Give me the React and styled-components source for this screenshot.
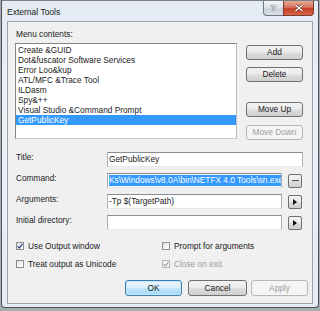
import React from "react";
import styled, { createGlobalStyle, css } from "styled-components";

const GlobalStyle = createGlobalStyle`
  html, body { margin: 0; padding: 0; }
  body {
    background: #a7adb5;
    width: 320px;
    height: 311px;
    overflow: hidden;
    font-family: "Liberation Sans", Arial, sans-serif;
    font-size: 8.3px;
    color: #1b1b1b;
  }
`;

const Window = styled.div`
  box-sizing: border-box;
  margin-left: 1px;
  width: 318px;
  height: 308px;
  border: 1px solid #4f5257;
  border-top-color: #7a7f86;
  border-radius: 0 0 4px 4px;
  background: linear-gradient(180deg, #e4ebf3 0%, #eef2f7 40%, #e6ecf3 100%);
  padding: 0 5px 3px 5px;
  display: flex;
  flex-direction: column;
`;

const TitleBar = styled.div`
  height: 20px;
  display: flex;
  align-items: flex-start;
  justify-content: space-between;
`;

const TitleText = styled.div`
  padding-top: 6px;
  font-size: 8.5px;
  line-height: 11px;
  color: #1a1a1a;
`;

const Captions = styled.div`
  display: flex;
  margin-right: -1px;
`;

const CaptionButton = styled.div`
  box-sizing: border-box;
  height: 15px;
  display: flex;
  align-items: center;
  justify-content: center;
  border: 1px solid #6f7880;
  border-top: none;
  ${(p) =>
    p.$close
      ? css`
          width: 31px;
          border-radius: 0 0 4px 0;
          background: linear-gradient(180deg, #e7a998 0%, #d7735d 45%, #c23f26 55%, #d8644a 100%);
          border-color: #7d3a2e;
        `
      : css`
          width: 20px;
          border-right: none;
          border-radius: 0 0 0 4px;
          background: linear-gradient(180deg, #f4f6f8 0%, #dde2e8 50%, #cbd2da 55%, #d9dfe6 100%);
        `}
`;

const Client = styled.div`
  flex: 1;
  box-sizing: border-box;
  background: #f0f0f0;
  border: 1px solid #9aa3ad;
  padding: 7px 0 0 7px;
  display: flex;
  flex-direction: column;
`;

const TopSection = styled.div`
  display: flex;
  align-items: flex-start;
`;

const ListColumn = styled.div`
  width: 222px;
  display: flex;
  flex-direction: column;
`;

const SectionLabel = styled.div`
  line-height: 11px;
  padding-left: 1px;
  margin-bottom: 3px;
`;

const ListBox = styled.div`
  box-sizing: border-box;
  height: 96px;
  background: #fff;
  border: 1px solid #82878e;
  border-right-color: #b6bcc4;
  border-bottom-color: #c9ced4;
  padding-top: 1px;
`;

const ListItem = styled.div`
  height: 10px;
  line-height: 10px;
  padding-left: 2px;
  white-space: nowrap;
  ${(p) =>
    p.$selected &&
    css`
      background: #3399ff;
      color: #fff;
    `}
`;

const SideButtons = styled.div`
  margin-left: 9px;
  margin-top: 16px;
  display: flex;
  flex-direction: column;
`;

const Button = styled.div`
  box-sizing: border-box;
  width: ${(p) => p.$w || 57}px;
  height: ${(p) => p.$h || 15}px;
  margin-top: ${(p) => p.$mt || 0}px;
  margin-left: ${(p) => p.$ml || 0}px;
  display: flex;
  align-items: center;
  justify-content: center;
  border: 1px solid #707070;
  border-radius: 3px;
  background: linear-gradient(180deg, #f2f2f2 0%, #ebebeb 48%, #dddddd 52%, #cfcfcf 100%);
  color: #1b1b1b;
  line-height: 1;
  ${(p) =>
    p.$default &&
    css`
      border-color: #3c7fb1;
      background: linear-gradient(180deg, #eaf6fd 0%, #d9f0fc 48%, #bee6fd 52%, #a7d9f5 100%);
      box-shadow: inset 0 0 0 1px #c8e6f8;
    `}
  ${(p) =>
    p.$disabled &&
    css`
      border-color: #b5b8bb;
      background: #f4f4f4;
      color: #a0a0a0;
    `}
`;

const Form = styled.div`
  margin-top: 12px;
  display: flex;
  flex-direction: column;
  gap: 6px;
`;

const FormRow = styled.div`
  display: flex;
  align-items: flex-start;
`;

const FieldLabel = styled.div`
  width: 91px;
  padding-left: 1px;
  line-height: 10px;
`;

const Input = styled.div`
  box-sizing: border-box;
  width: ${(p) => p.$w}px;
  height: 15px;
  background: #fff;
  border: 1px solid #abadb3;
  border-top-color: #8a8d94;
  border-bottom-color: #e3e9ef;
  padding: 0 1px;
  line-height: 13px;
  white-space: nowrap;
  overflow: hidden;
`;

const Selection = styled.span`
  display: inline-block;
  background: #3399ff;
  color: #fff;
  line-height: 11px;
  margin-top: 1px;
  vertical-align: top;
`;

const SmallButton = styled.div`
  box-sizing: border-box;
  width: 14px;
  height: 14px;
  margin-left: 6px;
  margin-top: 1px;
  border: 1px solid #707070;
  border-radius: 2px;
  background: linear-gradient(180deg, #f2f2f2 0%, #ebebeb 48%, #dddddd 52%, #cfcfcf 100%);
  display: flex;
  align-items: center;
  justify-content: center;
`;

const Options = styled.div`
  margin-top: 10px;
  display: grid;
  grid-template-columns: 146px auto;
  row-gap: 6px;
`;

const Option = styled.div`
  display: flex;
  align-items: center;
  height: 12px;
  color: ${(p) => (p.$disabled ? "#9c9c9c" : "#1b1b1b")};
`;

const Box = styled.div`
  box-sizing: border-box;
  width: 8px;
  height: 8px;
  margin-left: 1px;
  margin-right: 4px;
  border: 1px solid ${(p) => (p.$disabled ? "#b8b8b8" : "#8e8f8f")};
  background: ${(p) =>
    p.$disabled ? "#f4f4f4" : "linear-gradient(135deg, #dcdcdc 0%, #f6f6f6 60%, #ffffff 100%)"};
  display: flex;
  align-items: center;
  justify-content: center;
`;

const Footer = styled.div`
  margin-top: 10px;
  display: flex;
  justify-content: flex-end;
  padding-right: 4px;
  gap: 6px;
`;

const Check = ({ disabled }) => (
  <svg width="6" height="6" viewBox="0 0 6 6">
    <path
      d="M0.6 3.2 L2.3 5 L5.4 0.8"
      fill="none"
      stroke={disabled ? "#a5a5a5" : "#24407a"}
      strokeWidth="1.2"
    />
  </svg>
);

const Arrow = () => (
  <svg width="4" height="6" viewBox="0 0 4 6">
    <path d="M0 0 L4 3 L0 6 Z" fill="#111" />
  </svg>
);

const Dots = () => (
  <svg width="7" height="2" viewBox="0 0 7 2">
    <rect x="0" y="0" width="7" height="1" fill="#555" />
  </svg>
);

const CloseX = () => (
  <svg width="10" height="8" viewBox="0 0 10 8">
    <path d="M1.5 1 L8.5 7 M8.5 1 L1.5 7" stroke="#6a2a1f" strokeWidth="2.6" />
    <path d="M1.5 1 L8.5 7 M8.5 1 L1.5 7" stroke="#ffffff" strokeWidth="1.5" />
  </svg>
);

const HelpGlyph = styled.span`
  font-family: "Liberation Sans", Arial, sans-serif;
  font-size: 9px;
  font-weight: bold;
  color: #f8f8f8;
  text-shadow: 0 0 1px #333, 0 0 1px #333;
`;

const items = [
  "Create &GUID",
  "Dot&fuscator Software Services",
  "Error Loo&kup",
  "ATL/MFC &Trace Tool",
  "ILDasm",
  "Spy&++",
  "Visual Studio &Command Prompt",
  "GetPublicKey",
];

export default function App() {
  return (
    <>
      <GlobalStyle />
      <Window>
        <TitleBar>
          <TitleText>External Tools</TitleText>
          <Captions>
            <CaptionButton>
              <HelpGlyph>?</HelpGlyph>
            </CaptionButton>
            <CaptionButton $close>
              <CloseX />
            </CaptionButton>
          </Captions>
        </TitleBar>
        <Client>
          <TopSection>
            <ListColumn>
              <SectionLabel>Menu contents:</SectionLabel>
              <ListBox>
                {items.map((t) => (
                  <ListItem key={t} $selected={t === "GetPublicKey"}>
                    {t}
                  </ListItem>
                ))}
              </ListBox>
            </ListColumn>
            <SideButtons>
              <Button>Add</Button>
              <Button $mt={7}>Delete</Button>
              <Button $mt={20}>Move Up</Button>
              <Button $mt={8} $disabled>
                Move Down
              </Button>
            </SideButtons>
          </TopSection>
          <Form>
            <FormRow>
              <FieldLabel>Title:</FieldLabel>
              <Input $w={196}>GetPublicKey</Input>
            </FormRow>
            <FormRow>
              <FieldLabel>Command:</FieldLabel>
              <Input $w={175}>
                <Selection>Ks\Windows\v8.0A\bin\NETFX 4.0 Tools\sn.exe</Selection>
              </Input>
              <SmallButton>
                <Dots />
              </SmallButton>
            </FormRow>
            <FormRow>
              <FieldLabel>Arguments:</FieldLabel>
              <Input $w={175}>-Tp $(TargetPath)</Input>
              <SmallButton>
                <Arrow />
              </SmallButton>
            </FormRow>
            <FormRow>
              <FieldLabel>Initial directory:</FieldLabel>
              <Input $w={175}></Input>
              <SmallButton>
                <Arrow />
              </SmallButton>
            </FormRow>
          </Form>
          <Options>
            <Option>
              <Box>
                <Check />
              </Box>
              Use Output window
            </Option>
            <Option>
              <Box />
              Prompt for arguments
            </Option>
            <Option>
              <Box />
              Treat output as Unicode
            </Option>
            <Option $disabled>
              <Box $disabled>
                <Check disabled />
              </Box>
              Close on exit
            </Option>
          </Options>
          <Footer>
            <Button $default $h={16}>
              OK
            </Button>
            <Button $h={16} $w={59}>
              Cancel
            </Button>
            <Button $h={16} $disabled $ml={-2}>
              Apply
            </Button>
          </Footer>
        </Client>
      </Window>
    </>
  );
}
